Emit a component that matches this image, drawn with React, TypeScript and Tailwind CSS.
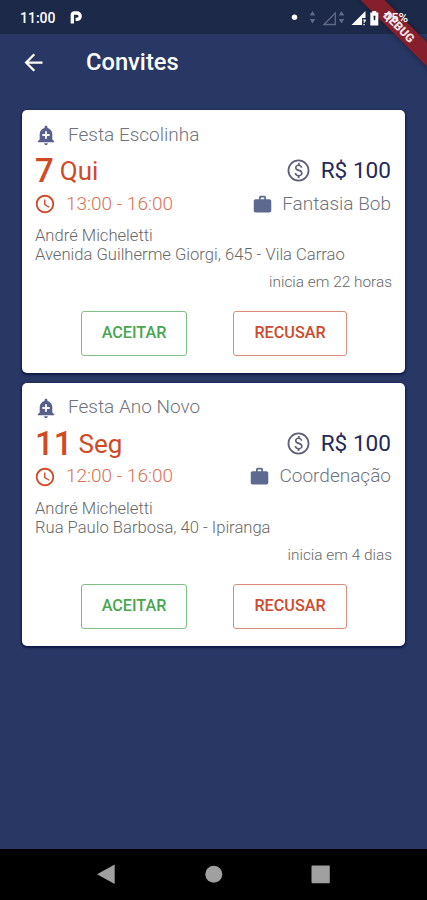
import type { ReactNode } from "react";

type Invite = {
  title: string;
  day: string;
  weekday: string;
  time: string;
  role: string;
  address: string;
  starts: string;
};

const invites: Invite[] = [
  {
    title: "Festa Escolinha",
    day: "7",
    weekday: "Qui",
    time: "13:00 - 16:00",
    role: "Fantasia Bob",
    address: "Avenida Guilherme Giorgi, 645 - Vila Carrao",
    starts: "inicia em 22 horas",
  },
  {
    title: "Festa Ano Novo",
    day: "11",
    weekday: "Seg",
    time: "12:00 - 16:00",
    role: "Coordenação",
    address: "Rua Paulo Barbosa, 40 - Ipiranga",
    starts: "inicia em 4 dias",
  },
];

function Icon({ d, className }: { d: string; className: string }) {
  return (
    <svg viewBox="0 0 24 24" fill="currentColor" className={"shrink-0 " + className}>
      <path d={d} />
    </svg>
  );
}

const BELL =
  "M10.01 21.01c0 1.1.89 1.99 1.99 1.99s1.99-.89 1.99-1.99h-3.98zM18.88 16.82V11c0-3.25-2.25-5.97-5.29-6.69v-.72C13.59 2.71 12.88 2 12 2s-1.59.71-1.59 1.59v.72C7.37 5.03 5.12 7.75 5.12 11v5.82L3 18.94V20h18v-1.06l-2.12-2.12zM16 13.01h-3v3h-2v-3H8V11h3V8h2v3h3v2.01z";
const CLOCK =
  "M11.99 2C6.47 2 2 6.48 2 12s4.47 10 9.99 10C17.52 22 22 17.52 22 12S17.52 2 11.99 2zM12 20c-4.42 0-8-3.58-8-8s3.58-8 8-8 8 3.58 8 8-3.58 8-8 8zM12.5 7H11v6l5.25 3.15.75-1.23-4.5-2.67z";
const CASE =
  "M20 6h-4V4c0-1.11-.89-2-2-2h-4c-1.11 0-2 .89-2 2v2H4c-1.11 0-2 .89-2 2v11c0 1.11.89 2 2 2h16c1.11 0 2-.89 2-2V8c0-1.11-.89-2-2-2zm-6 0h-4V4h4v2z";
const ARROW = "M20 11H7.83l5.59-5.59L12 4l-8 8 8 8 1.41-1.41L7.83 13H20v-2z";
const COIN =
  "M12 1.5a10.5 10.5 0 1 0 0 21 10.5 10.5 0 0 0 0-21zm0 19.3a8.8 8.8 0 1 1 0-17.6 8.8 8.8 0 0 1 0 17.6zM12.7 11.1c-1.7-.5-2.5-.9-2.5-1.9 0-1 .7-1.6 1.9-1.6 1.3 0 1.9.7 2 1.8h1.6c-.1-1.5-.9-2.6-2.5-3V4.7h-1.7v1.6c-1.7.3-2.9 1.4-2.9 3 0 1.9 1.5 2.7 3.5 3.3 1.8.5 2.3 1.1 2.3 2 0 .9-.6 1.7-2.1 1.7-1.5 0-2.3-.7-2.4-1.9H8.2c.1 1.9 1.4 2.9 3 3.2v1.7h1.7v-1.6c1.7-.3 3.1-1.3 3.1-3 0-2.3-1.7-3.1-3.3-3.6z";

function StatusBar() {
  return (
    <div className="relative z-20 flex h-[34px] items-center pt-[2px] pl-[20px] text-white">
      <span className="w-[49px] text-[14px] font-medium">11:00</span>
      <svg viewBox="0 0 14 16" className="h-4 w-[14px]">
        <path
          d="M3.3 13.6V4.8Q3.3 3 5.3 3H8a3.2 3.2 0 0 1 0 6.4H6.6"
          fill="none"
          stroke="white"
          strokeWidth="3.3"
        />
      </svg>
      <svg viewBox="284 0 100 34" className="ml-[201px] h-[34px] w-[100px] shrink-0">
        <circle cx="294.5" cy="16.3" r="2.7" fill="white" />
        <g fill="#606b87">
          <path d="M309.800 14.500l2.700-4.500 2.700 4.500zM309.800 18l2.700 4.500 2.700-4.500z" />
          <path d="M338.800 14.500l2.700-4.500 2.700 4.500zM338.800 18l2.700 4.500 2.700-4.500z" />
        </g>
        <path d="M324 23.5L335.3 12V23.5z" fill="none" stroke="#606b87" strokeWidth="1.3" />
        <path d="M351.500 24L365.500 10V17H362V24z" fill="white" />
        <path d="M362.800 18.500h3v1.400l-1.200 1.300v.8h-1v-1.200l1-1.200h-1.800zM363.400 23h1.300v1.200h-1.300z" fill="white" />
        <path
          fillRule="evenodd"
          d="M370.300 11.500h2v-1.500h4v1.500h2v13h-8zM373.500 14.800h2l-.3 4.500h-1.400z"
          fill="white"
        />
      </svg>
      <span className="w-[26px] text-[13px] font-medium tracking-[-0.2px]">75%</span>
    </div>
  );
}

function ActionButton({ className, children }: { className: string; children: ReactNode }) {
  return (
    <button
      className={
        "flex h-[45px] items-center justify-center rounded-[3px] border-[1.5px] text-[16.2px] font-medium " +
        className
      }
    >
      {children}
    </button>
  );
}

function InviteCard({ invite }: { invite: Invite }) {
  return (
    <article className="h-[263px] rounded-[5px] bg-white px-[13px] pt-[13px] shadow-[0_1px_2px_1px_#101b45]">
      <div className="flex h-6 items-center text-[#70737d]">
        <Icon d={BELL} className="h-[22px] w-[22px] text-[#56608a]" />
        <h2 className="ml-[11px] text-[19px] font-light whitespace-nowrap">{invite.title}</h2>
      </div>
      <div className="flex h-12 items-center justify-between">
        <div className="flex items-baseline text-[#d04a26]">
          <span className="text-[33px] font-medium">{invite.day}</span>
          <span className="relative -top-[2px] ml-[6px] text-[26px]">{invite.weekday}</span>
        </div>
        <div className="flex items-center pr-[1px] text-[#25295a]">
          <Icon d={COIN} className="h-[25px] w-[25px] text-[#5d6078]" />
          <span className="ml-[10px] text-[22.6px]">R$ 100</span>
        </div>
      </div>
      <div className="flex h-[18px] items-center justify-between">
        <div className="flex items-center text-[#d04a26]">
          <Icon d={CLOCK} className="-ml-[1px] h-[22px] w-[22px]" />
          <span className="ml-[10px] text-[19px] font-light text-[#dc6f54]">{invite.time}</span>
        </div>
        <div className="flex items-center pr-[1px] text-[#70737d]">
          <Icon d={CASE} className="h-[21px] w-[21px] text-[#5d698f]" />
          <span className="ml-[9px] text-[19px] font-light">{invite.role}</span>
        </div>
      </div>
      <div className="mt-[13px] text-[16.6px] leading-[19px] font-light whitespace-nowrap text-[#686868]">
        <p>André Micheletti</p>
        <p>{invite.address}</p>
      </div>
      <p className="mt-[9px] text-right text-[15.4px] leading-[19px] font-light text-[#686868]">
        {invite.starts}
      </p>
      <div className="mt-[19px] flex gap-[46px] pl-[46px]">
        <ActionButton className="w-[106px] border-[#7fc083] text-[#4aa650]">ACEITAR</ActionButton>
        <ActionButton className="w-[114px] border-[#dc8d79] text-[#cd4b2c]">RECUSAR</ActionButton>
      </div>
    </article>
  );
}

export default function App() {
  return (
    <div className="relative flex h-[900px] w-[427px] flex-col overflow-hidden bg-[#283763] font-['Roboto','Liberation_Sans',sans-serif]">
      <div className="bg-[#1d2948]">
        <StatusBar />
      </div>
      <header className="flex h-14 items-center pl-5 text-white">
        <Icon d={ARROW} className="h-[27px] w-[27px]" />
        <h1 className="ml-[39px] pt-[1px] text-[23.7px] font-medium">Convites</h1>
      </header>
      <main className="flex flex-1 flex-col gap-[9.5px] px-[22px] pt-5">
        {invites.map((invite) => (
          <InviteCard key={invite.title} invite={invite} />
        ))}
      </main>
      <nav className="h-[51px] bg-black">
        <svg viewBox="0 0 427 51" className="h-[51px] w-[427px]" fill="#a0a0a0">
          <path d="M97 25.300L114.700 15.500V35z" />
          <circle cx="213.8" cy="25.3" r="8.5" />
          <rect x="311.5" y="16.5" width="18.3" height="17.7" rx="1" />
        </svg>
      </nav>
      <div className="absolute top-[20px] left-[341px] z-10 flex h-[17px] w-[120px] rotate-45 items-center justify-center bg-[#851f2c] text-[12px] font-black text-[#eedfe2] shadow-[0_0_5px_#0006]">
        <span className="pr-[5px]">DEBUG</span>
      </div>
    </div>
  );
}
